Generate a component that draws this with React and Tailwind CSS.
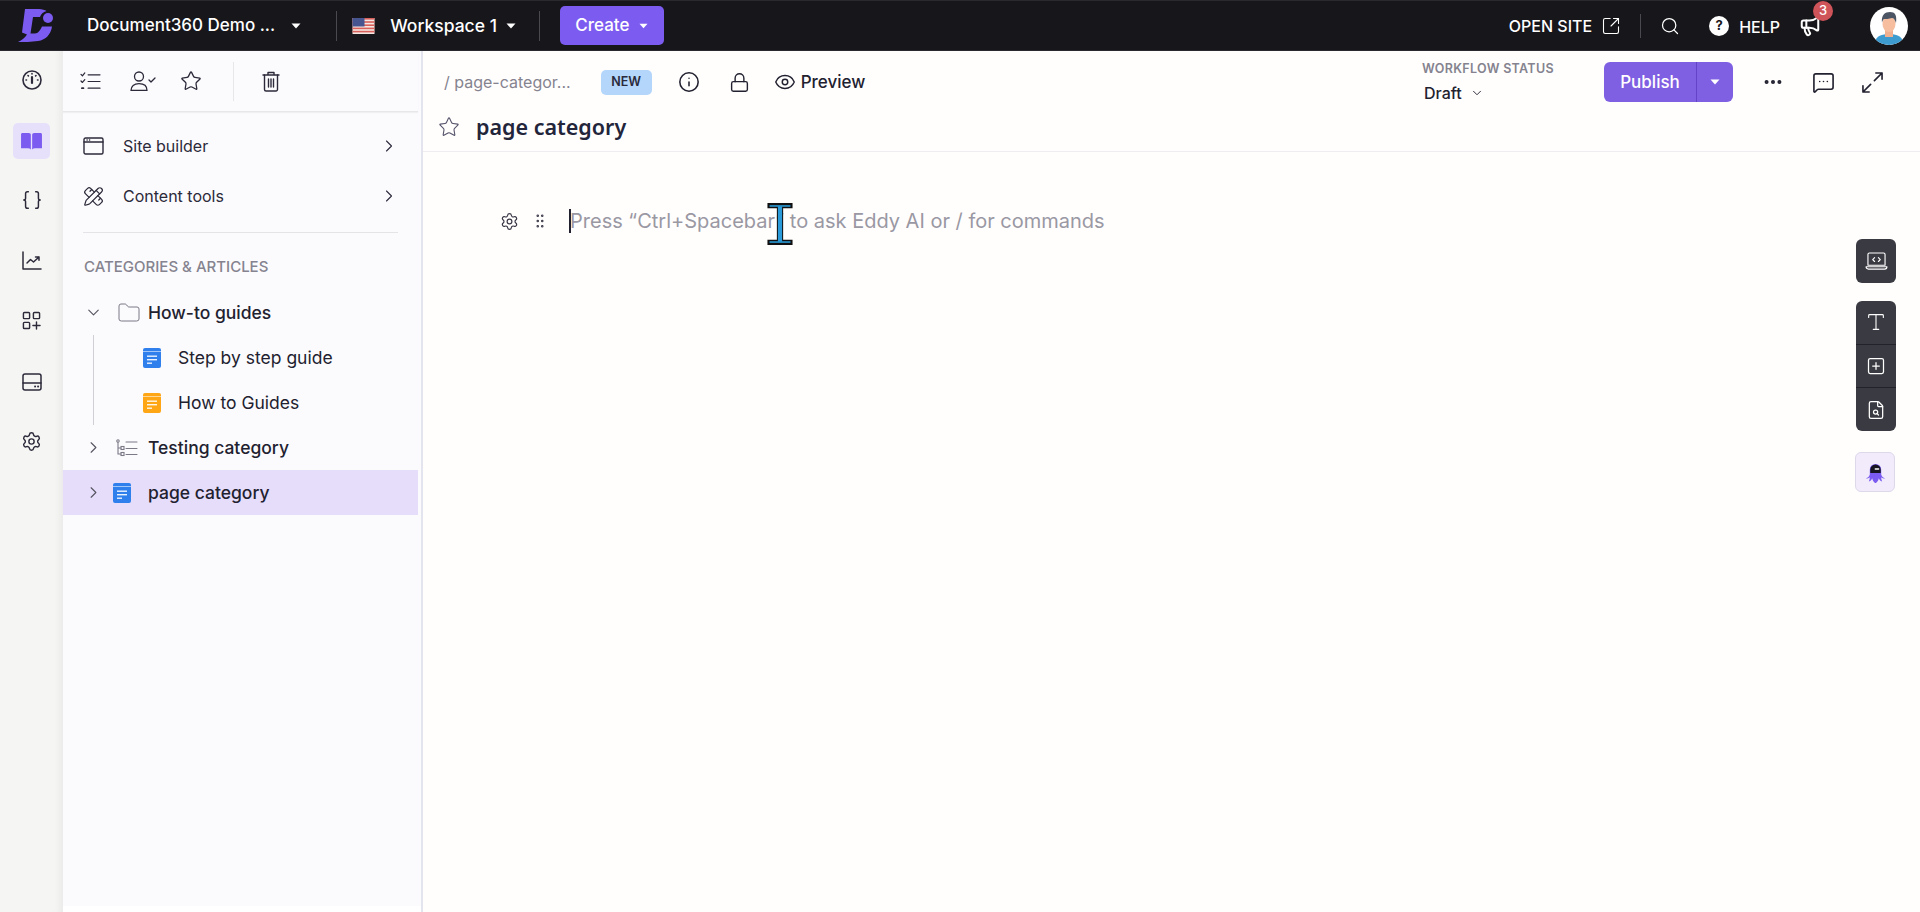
import React from "react";
import { ChevronRight, ChevronDown, Folder, Star, Settings, Braces, PencilRuler, Search, SquareArrowOutUpRight, Info, Lock, Eye, Ellipsis, MessageSquareMore, Megaphone, GripVertical, Type, SquarePlus, FileSearch } from "lucide-react";

const Caret = ({ className = "" }) => (
  <svg viewBox="0 0 10 6" className={className} fill="currentColor"><path d="M0.5 0.5h9L5 5.5z" /></svg>
);

const Doc = ({ color, className = "" }) => (
  <svg viewBox="0 0 18 20" className={className}>
    <rect x="0" y="0" width="18" height="20" rx="2" fill={color} />
    <rect x="0" y="3" width="18" height="1" fill="#ffffff" opacity="0.55" />
    <rect x="4" y="7.5" width="10" height="1.4" fill="#fff" opacity="0.9" />
    <rect x="4" y="11" width="10" height="1.4" fill="#fff" opacity="0.9" />
    <rect x="4" y="14.5" width="5" height="1.4" fill="#fff" opacity="0.9" />
  </svg>
);

const s = { fill: "none", stroke: "currentColor", strokeWidth: 1.5, strokeLinecap: "round", strokeLinejoin: "round" };

const Gauge = () => (
  <svg viewBox="0 0 20 20" className="w-5 h-5" {...s}>
    <circle cx="10" cy="10" r="9" strokeWidth="1.6" />
    <path d="M10 7v6" strokeWidth="2.2" />
    <path d="M10 3.5v.5M6 5.5l.4.4M14 5.5l-.4.4M4 10h.5M15.5 10h.5" strokeWidth="1.6" />
  </svg>
);
const Book = () => (
  <svg viewBox="0 0 24 20" className="w-[23px] h-[19px]" fill="#7c5cf0">
    <path d="M1 2.5C1 1.5 1.8 1 2.8 1H9c1.5 0 2.3.8 2.3 2v15.5c-.8-.9-1.8-1.3-3-1.3H1z" />
    <path d="M23 2.5C23 1.5 22.2 1 21.2 1H15c-1.5 0-2.3.8-2.3 2v15.5c.8-.9 1.8-1.3 3-1.3H23z" />
  </svg>
);
const Chart = () => (
  <svg viewBox="0 0 20 20" className="w-5 h-5" {...s}>
    <path d="M1 1v17h18" />
    <path d="M5 12l3.5-3.5 3 2.5L17 6M13.5 6H17v3.2" />
  </svg>
);
const Apps = () => (
  <svg viewBox="0 0 20 20" className="w-[19px] h-[19px]" {...s}>
    <rect x="1.5" y="1.5" width="6.5" height="6.5" rx="1" />
    <rect x="12" y="1.5" width="6.5" height="6.5" rx="1" />
    <rect x="1.5" y="12" width="6.5" height="6.5" rx="1" />
    <path d="M11.5 15.25h7.5M15.25 11.5V19" />
  </svg>
);
const Storage = () => (
  <svg viewBox="0 0 20 18" className="w-5 h-[18px]" {...s}>
    <rect x="1" y="1" width="18" height="16" rx="2" />
    <path d="M1 10h18" />
    <path d="M13 13.5h.2M16 13.5h.2" strokeWidth="1.8" />
  </svg>
);
const CheckList = () => (
  <svg viewBox="0 0 22 20" className="w-[21px] h-[19px]" {...s} strokeWidth="1.3">
    <path d="M8.5 3h12.5M8.5 10h12.5M8.5 17h12.5" />
    <path d="M1 2.5l1.5 1.5L5 1M1 9.5L2.5 11 5 8" />
    <path d="M2 17h1.5" strokeWidth="2" />
  </svg>
);
const UserCheck = () => (
  <svg viewBox="0 0 26 20" className="w-[26px] h-5" {...s} strokeWidth="1.3">
    <circle cx="9" cy="5.5" r="4.5" />
    <path d="M1 19.5c0-4.5 3-6.8 8-6.8s8 2.3 8 6.8z" />
    <path d="M19 9l2 2 4-4" />
  </svg>
);
const Trash = () => (
  <svg viewBox="0 0 18 21" className="w-[18px] h-[21px]" {...s} strokeWidth="1.4">
    <path d="M1 4h16M6 4V1.5h6V4" />
    <path d="M2.5 4v14.5a1.5 1.5 0 0 0 1.5 1.5h10a1.5 1.5 0 0 0 1.5-1.5V4" />
    <path d="M6.5 8v8M9 8v8M11.5 8v8" />
  </svg>
);
const Win = () => (
  <svg viewBox="0 0 21 18" className="w-[21px] h-[18px]" {...s} strokeWidth="1.4">
    <rect x="1" y="1" width="19" height="16" rx="1.5" />
    <path d="M1 5h19M4 3h.2M6.5 3h.2" />
  </svg>
);
const TreeList = () => (
  <svg viewBox="0 0 22 18" className="w-[22px] h-[18px]" fill="none" stroke="#7b7986" strokeWidth="1.1" strokeLinecap="round">
    <circle cx="2" cy="2" r="1.2" />
    <path d="M2 3.5V15h3M2 9h3M10 3h11M10 9.5h11M10 15.5h11" />
    <rect x="5" y="7.5" width="3" height="3" />
    <rect x="5" y="13.5" width="3" height="3" />
  </svg>
);
const Logo = () => (
  <svg viewBox="0 0 35 33" className="w-[35px] h-[33px]" fill="#7c5cf0">
    <path d="M7 0H21C24 0 27 1 28.500 2C25 3 23 5 22 8H15L12.500 24.500H17C20 24.500 22.500 21 24 17.500H34C33 25 28 31 20 32C13 33 6 33 0 33C4 31 7 29 9 25.500L4 23.500Z" />
    <circle cx="30" cy="9" r="5" />
  </svg>
);
const Flag = () => (
  <svg viewBox="0 0 22 16" className="w-[23px] h-4">
    <rect width="22" height="16" fill="#f4e6e2" />
    <rect y="0" width="22" height="1.600" fill="#d9605a" />
    <rect y="3.200" width="22" height="1.600" fill="#d9605a" />
    <rect y="6.400" width="22" height="1.600" fill="#d9605a" />
    <rect y="9.600" width="22" height="1.600" fill="#d9605a" />
    <rect y="12.800" width="22" height="1.600" fill="#d9605a" />
    <rect width="12" height="8.500" fill="#46548f" />
  </svg>
);
const Avatar = () => (
  <svg viewBox="0 0 38 38" className="w-[38px] h-[38px] rounded-full bg-white">
    <path d="M5 35c1-6 7-8 14-8s13 2 14 8c-4 2-9 3-14 3s-10-1-14-3z" fill="#3d9bd0" />
    <rect x="15" y="22" width="8" height="8" fill="#f0b08f" />
    <ellipse cx="19" cy="17" rx="6.5" ry="8" fill="#f6bd9f" />
    <path d="M12 16c-1-8 3-11 8-11s7 3 6 11c-1-3-2-5-4-5-3 1-7 1-8 1-1 1-2 2-2 4z" fill="#4b5563" />
  </svg>
);
const Eddy = () => (
  <svg viewBox="0 0 20 22" className="w-[19px] h-[21px]">
    <path d="M4 8a6 6 0 0 1 12 0v5c.5 2 2 3.500 4 4-2 .5-3 0-4-1 0 2 .5 3 1 4.500-2-.5-3-2-3.500-3.500-.5 2-1 3.500-3.500 5.500-2.500-2-3-3.500-3.500-5.500C6 18.500 5 20 3 20.500c.5-1.500 1-2.500 1-4.500-1 1-2 1.500-4 1 2-.5 3.500-2 4-4z" fill="#7c5cf0" />
    <path d="M4.500 8a5.500 5.500 0 0 1 11 0v3.500h-11z" fill="#17151f" />
    <rect x="9" y="6.500" width="5" height="1.600" rx="0.800" fill="#fff" />
  </svg>
);
const ExpandArrows = () => (
  <svg viewBox="0 0 22 22" className="w-[21px] h-[21px]" {...s} strokeWidth="1.7">
    <path d="M13 9l8-8M14.500 1H21v6.500" />
    <path d="M9 13l-8 8M7.500 21H1v-6.500" />
  </svg>
);

const railBtn = "flex items-center justify-center w-[37px] h-[35px] text-[#2c2a3a]";
const treeText = "text-[17.5px] leading-none text-[#22212f]";

export default function App() {
  return (
    <div className="h-screen w-[1920px] flex flex-col overflow-hidden bg-[#fffefd] font-['Inter',sans-serif] text-[#22212f]">
      {/* top bar */}
      <header className="h-[51px] shrink-0 flex items-center bg-[#17161b] border-y border-[#2a2930] text-white">
        <div className="ml-[18px] w-[35px] flex items-center"><Logo /></div>
        <span className="ml-[34px] text-[17px] font-medium leading-none">Document360 Demo ...</span>
        <Caret className="ml-[16px] w-[10px] h-[6px]" />
        <span className="ml-[35px] w-px h-[30px] bg-[#4a4950]" />
        <span className="ml-[15px] flex"><Flag /></span>
        <span className="ml-[15px] text-[17.5px] font-medium leading-none">Workspace 1</span>
        <Caret className="ml-[9px] w-[10px] h-[6px]" />
        <span className="ml-[23px] w-px h-[30px] bg-[#4a4950]" />
        <button className="ml-[20px] w-[104px] h-[39px] rounded-[5px] bg-[#7c5cf0] flex items-center justify-center gap-[10px] text-[17px] font-medium">
          Create <Caret className="w-[9px] h-[6px]" />
        </button>
        <span className="ml-auto text-[16px] font-medium leading-none">OPEN SITE</span>
        <SquareArrowOutUpRight className="ml-[9px] w-5 h-5" strokeWidth={1.3} />
        <span className="ml-[19px] w-px h-[24px] bg-[#4a4950]" />
        <Search className="ml-[19px] w-5 h-5" strokeWidth={1.5} />
        <span className="ml-[29px] w-5 h-5 rounded-full bg-white text-[#17161b] text-[13px] font-bold flex items-center justify-center">?</span>
        <span className="ml-[10px] text-[16px] font-medium leading-none mt-[3px]">HELP</span>
        <span className="relative ml-[19px] flex">
          <Megaphone className="w-[22px] h-[22px]" strokeWidth={2.2} />
          <span className="absolute -top-[14px] left-[14px] w-5 h-5 rounded-full bg-[#cf5459] text-[13px] font-medium flex items-center justify-center">3</span>
        </span>
        <span className="ml-[49px] mr-[12px] flex"><Avatar /></span>
      </header>

      <div className="flex-1 flex min-h-0">
        {/* rail */}
        <nav className="w-[63px] shrink-0 bg-[#f5f5f3] shadow-[inset_-8px_0_6px_-5px_#e9e9e9] flex flex-col items-center pt-[11px]">
          <div className={railBtn}><Gauge /></div>
          <div className="mt-[26px] flex items-center justify-center w-[37px] h-[36px] rounded-[5px] bg-[#e7e0fb]"><Book /></div>
          <div className={`${railBtn} mt-[23px]`}><Braces className="w-[22px] h-[22px]" strokeWidth={1.6} /></div>
          <div className={`${railBtn} mt-[26px]`}><Chart /></div>
          <div className={`${railBtn} mt-[25px]`}><Apps /></div>
          <div className={`${railBtn} mt-[26px]`}><Storage /></div>
          <div className={`${railBtn} mt-[25px]`}><Settings className="w-[21px] h-[21px]" strokeWidth={1.6} /></div>
        </nav>

        {/* sidebar */}
        <aside className="w-[360px] shrink-0 bg-white border-r-2 border-[#e4e4ee] flex flex-col">
          <div className="flex-1 mb-[6px] bg-[#fbfbfd] flex flex-col">
          <div className="mr-[3px] h-[61px] shrink-0 border-b border-[#e7e7ea] flex items-center text-[#2c2a3a] shadow-[0_1px_1px_#f0f0f3]">
            <span className="ml-[17px] flex"><CheckList /></span>
            <span className="ml-[29px] flex"><UserCheck /></span>
            <Star className="ml-[24px] w-[22px] h-[22px]" strokeWidth={1.4} />
            <span className="ml-[31px] w-px h-[39px] bg-[#e7e7ea]" />
            <span className="ml-[28px] flex"><Trash /></span>
          </div>
          <div className="h-[50px] mt-[9px] flex items-center text-[#2c2a3a]">
            <span className="ml-[20px] flex"><Win /></span>
            <span className="ml-[19px] text-[16px] leading-none">Site builder</span>
            <ChevronRight className="ml-auto mr-[22px] w-5 h-5" strokeWidth={1.3} />
          </div>
          <div className="h-[50px] flex items-center text-[#2c2a3a]">
            <PencilRuler className="ml-[20px] w-[21px] h-[21px]" strokeWidth={1.4} />
            <span className="ml-[19px] text-[16px] leading-none">Content tools</span>
            <ChevronRight className="ml-auto mr-[22px] w-5 h-5" strokeWidth={1.3} />
          </div>
          <div className="ml-[20px] mr-[23px] mt-[11px] h-px bg-[#e4e4e8] shrink-0" />
          <div className="ml-[21px] mt-[26px] text-[15px] font-medium leading-none text-[#85838f]">CATEGORIES &amp; ARTICLES</div>

          <div className="mr-[3px] mt-[16px] flex flex-col relative">
            <div className="h-[45px] flex items-center">
              <ChevronDown className="ml-[21px] w-[19px] h-[19px] text-[#55535f]" strokeWidth={1.4} />
              <Folder className="ml-[14px] w-[24px] h-[24px] text-[#7b7986]" strokeWidth={1} />
              <span className={`${treeText} ml-[7px] font-medium`}>How-to guides</span>
            </div>
            <div className="ml-[30px] border-l border-[#cfcfd4]">
              <div className="h-[45px] flex items-center">
                <Doc color="#2f80ed" className="ml-[49px] w-[18px] h-[20px]" />
                <span className={`${treeText} ml-[17px]`}>Step by step guide</span>
              </div>
              <div className="h-[45px] flex items-center">
                <Doc color="#ffa616" className="ml-[49px] w-[18px] h-[20px]" />
                <span className={`${treeText} ml-[17px]`}>How to Guides</span>
              </div>
            </div>
            <div className="h-[45px] flex items-center">
              <ChevronRight className="ml-[21px] w-[19px] h-[19px] text-[#55535f]" strokeWidth={1.4} />
              <span className="ml-[13px] flex"><TreeList /></span>
              <span className={`${treeText} ml-[10px] font-medium`}>Testing category</span>
            </div>
            <div className="h-[45px] flex items-center bg-[#e6ddfb]">
              <ChevronRight className="ml-[21px] w-[19px] h-[19px] text-[#55535f]" strokeWidth={1.4} />
              <Doc color="#2f80ed" className="ml-[10px] w-[18px] h-[20px]" />
              <span className={`${treeText} ml-[17px] font-medium`}>page category</span>
            </div>
          </div>
          </div>
        </aside>

        {/* main */}
        <main className="flex-1 min-w-0 flex flex-col relative">
          <div className="h-[101px] shrink-0 border-b border-[#eeeef0] flex flex-col">
            <div className="h-[62px] flex items-center">
              <span className="ml-[21px] text-[16px] leading-none text-[#85838f]">/ page-categor...</span>
              <span className="ml-[30px] w-[51px] h-[25px] rounded-[5px] bg-[#b4d6fa] flex items-center justify-center text-[12.5px] font-semibold text-[#2a2a3c]">NEW</span>
              <Info className="ml-[26px] w-[22px] h-[22px]" strokeWidth={1.7} />
              <Lock className="ml-[29px] w-[21px] h-[21px]" strokeWidth={1.6} />
              <Eye className="ml-[24px] w-[22px] h-[22px]" strokeWidth={1.6} />
              <span className="ml-[5px] text-[17px] font-medium leading-none">Preview</span>
              <div className="ml-auto flex flex-col w-[182px]">
                <span className="text-[12.5px] font-semibold leading-none tracking-[0.3px] text-[#85838f]">WORKFLOW STATUS</span>
                <span className="mt-[9px] ml-[2px] flex items-center text-[16px] font-medium leading-none">Draft<ChevronDown className="ml-[8px] w-[14px] h-[14px]" strokeWidth={1.6} /></span>
              </div>
              <div className="w-[129px] h-[40px] rounded-[6px] bg-[#7f60e2] text-white flex items-center">
                <span className="w-[92px] text-center text-[17px] font-medium leading-none">Publish</span>
                <span className="w-px h-full bg-[#6543c8]" />
                <span className="flex-1 flex justify-center"><Caret className="w-[10px] h-[6px]" /></span>
              </div>
              <Ellipsis className="ml-[29px] w-[22px] h-[22px]" strokeWidth={2.4} />
              <MessageSquareMore className="ml-[28px] w-[23px] h-[23px]" strokeWidth={1.7} />
              <span className="ml-[27px] mr-[37px] flex"><ExpandArrows /></span>
            </div>
            <div className="flex items-center h-[28px]">
              <Star className="ml-[15px] w-[22px] h-[22px] text-[#55536a]" strokeWidth={1.2} />
              <span className="ml-[16px] text-[21.5px] font-semibold leading-none text-[#23253b] font-['Noto_Sans',sans-serif]">page category</span>
            </div>
          </div>

          <div className="mt-[56px] flex items-center h-[26px] relative">
            <Settings className="ml-[77px] w-[19px] h-[19px] text-[#3a3846]" strokeWidth={1.5} />
            <GripVertical className="ml-[12px] w-[18px] h-[18px] text-[#3a3846]" strokeWidth={1.4} />
            <span className="ml-[20px] w-[2px] h-[24px] bg-[#22212f]" />
            <span className="-ml-px text-[20px] leading-none text-[#9a98a3]">Press “Ctrl+Spacebar” to ask Eddy AI or / for commands</span>
            {/* text cursor overlay */}
            <svg viewBox="0 0 28 44" className="absolute left-[342px] -top-[7px] w-[30px] h-[46px]">
              <path d="M2 2h24v5h-9v30h9v5H2v-5h9V7H2z" fill="#111" />
              <rect x="12" y="5" width="4" height="34" fill="#2a9bd8" />
              <rect x="4" y="4" width="20" height="1.500" fill="#2a9bd8" />
              <rect x="4" y="38.500" width="20" height="1.500" fill="#2a9bd8" />
            </svg>
          </div>

          {/* floating tools */}
          <div className="absolute left-[1433px] top-[188px] flex flex-col text-white">
            <div className="w-[40px] h-[44px] rounded-[6px] bg-[#3a3a42] flex items-center justify-center">
              <svg viewBox="0 0 24 20" className="w-[23px] h-[19px]" {...s} strokeWidth="1.200">
                <path d="M3 14V2.500A1.500 1.500 0 0 1 4.500 1h15A1.500 1.500 0 0 1 21 2.500V14z" />
                <path d="M1 15.500h22c0 1.500-1 2.500-2.500 2.500h-17C2 18 1 17 1 15.500z" />
                <path d="M10 6l-2 2 2 2M14 6l2 2-2 2" />
              </svg>
            </div>
            <div className="mt-[18px] w-[40px] h-[130px] rounded-[6px] bg-[#3a3a42] flex flex-col divide-y divide-[#22222a]">
              <div className="flex-1 flex items-center justify-center"><Type className="w-[22px] h-[22px]" strokeWidth={1.200} /></div>
              <div className="flex-1 flex items-center justify-center"><SquarePlus className="w-[20px] h-[20px]" strokeWidth={1.500} /></div>
              <div className="flex-1 flex items-center justify-center"><FileSearch className="w-[20px] h-[20px]" strokeWidth={1.500} /></div>
            </div>
            <div className="mt-[21px] -ml-px w-[40px] h-[40px] rounded-[6px] bg-[#f1ebfc] border border-[#ddd8ea] flex items-center justify-center"><Eddy /></div>
          </div>
        </main>
      </div>
    </div>
  );
}
